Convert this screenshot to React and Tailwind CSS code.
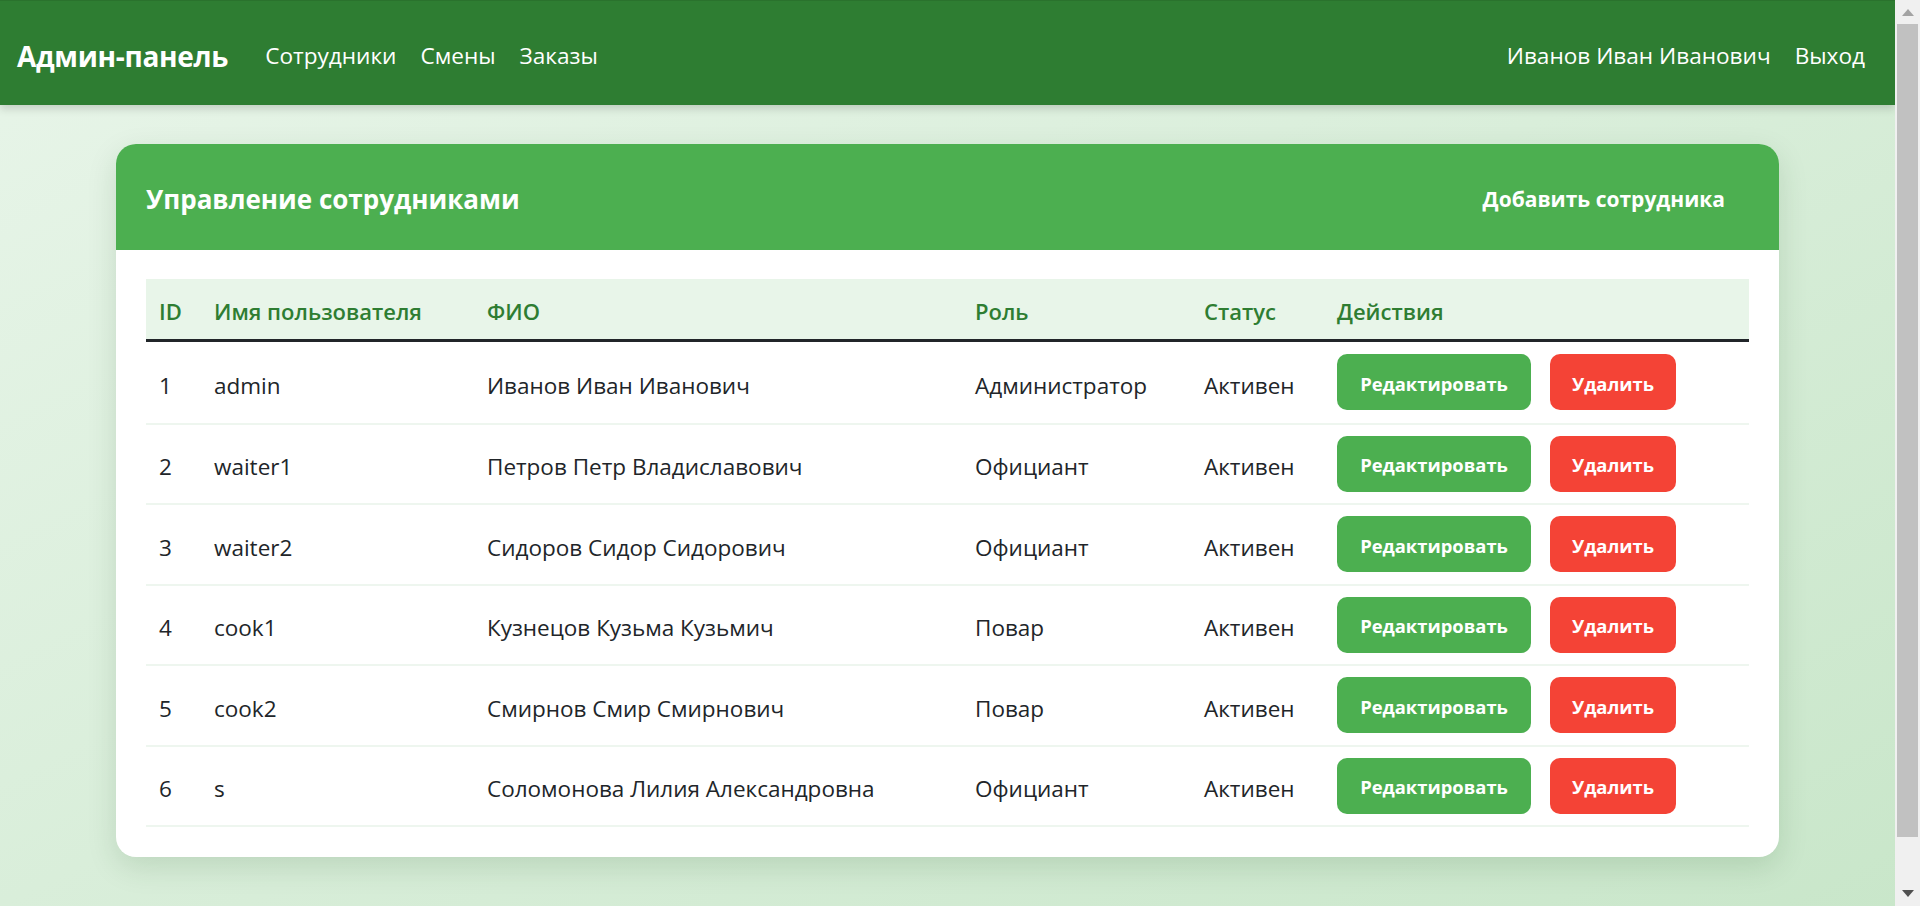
import React from "react";

const rows = [
  ["1", "admin", "Иванов Иван Иванович", "Администратор"],
  ["2", "waiter1", "Петров Петр Владиславович", "Официант"],
  ["3", "waiter2", "Сидоров Сидор Сидорович", "Официант"],
  ["4", "cook1", "Кузнецов Кузьма Кузьмич", "Повар"],
  ["5", "cook2", "Смирнов Смир Смирнович", "Повар"],
  ["6", "s", "Соломонова Лилия Александровна", "Официант"],
];

function Scrollbar() {
  return (
    <div className="w-[25px] h-full bg-[#f0f0f0] flex flex-col items-center shrink-0">
      <div className="h-[24px] w-full flex items-center justify-center">
        <svg width="12" height="7" viewBox="0 0 12 7"><path d="M6 0 L12 7 L0 7 Z" fill="#a3a3a3" /></svg>
      </div>
      <div className="w-[21px] h-[813px] bg-[#c1c1c1]" />
      <div className="flex-1 w-full flex items-end justify-center pb-[9px]">
        <svg width="12" height="7" viewBox="0 0 12 7"><path d="M0 0 L12 0 L6 7 Z" fill="#505050" /></svg>
      </div>
    </div>
  );
}

export default function App() {
  return (
    <div
      className="h-screen flex overflow-hidden"
      style={{ fontFamily: '"Open Sans", "Noto Sans", sans-serif' }}
    >
      <div className="flex-1 overflow-hidden">
        <div className="min-h-[965px] bg-gradient-to-br from-[#e8f5e9] to-[#c8e6c9] pb-[110px]">
          <nav className="h-[105px] bg-[#2e7d32] border-t border-[#2a722d] shadow-[0_4px_8px_rgba(0,0,0,0.15)] flex items-center justify-between pl-[17px] pr-[30px] pt-[5px] text-white relative z-10">
            <div className="flex items-center">
              <span className="text-[28px] font-bold tracking-[-0.3px] mr-[37px]">Админ-панель</span>
              <div className="flex items-center gap-[24px] text-[22.6px]">
                <span>Сотрудники</span>
                <span>Смены</span>
                <span>Заказы</span>
              </div>
            </div>
            <div className="flex items-center gap-[24px] text-[22.6px]">
              <span>Иванов Иван Иванович</span>
              <span>Выход</span>
            </div>
          </nav>

          <div className="mx-auto mt-[39px] w-[1663px] bg-white rounded-[20px] shadow-[0_10px_30px_rgba(0,60,0,0.13)] overflow-hidden">
            <div className="h-[106px] bg-[#4caf50] flex items-center justify-between pl-[30px] pr-[30px] pt-[5px] text-white">
              <h2 className="text-[26px] font-bold">Управление сотрудниками</h2>
              <button className="px-[24px] py-[10px] text-[21px] font-bold">Добавить сотрудника</button>
            </div>
            <div className="p-[30px] pt-[29px]">
              <table className="w-full table-fixed text-[22.5px] text-[#212529] border-collapse">
                <colgroup>
                  <col className="w-[55px]" />
                  <col className="w-[273px]" />
                  <col className="w-[488px]" />
                  <col className="w-[229px]" />
                  <col className="w-[133px]" />
                  <col />
                </colgroup>
                <thead>
                  <tr className="bg-[#e8f5e9] text-[#2e7d32] h-[61px] border-b-[3px] border-[#212529]">
                    <th className="text-left font-semibold px-[13px] pt-[5px] text-[22px]">ID</th>
                    <th className="text-left font-semibold px-[13px] pt-[5px] text-[22px]">Имя пользователя</th>
                    <th className="text-left font-semibold px-[13px] pt-[5px] text-[22px]">ФИО</th>
                    <th className="text-left font-semibold px-[13px] pt-[5px] text-[22px]">Роль</th>
                    <th className="text-left font-semibold px-[13px] pt-[5px] text-[22px]">Статус</th>
                    <th className="text-left font-semibold px-[13px] pt-[5px] text-[22px]">Действия</th>
                  </tr>
                </thead>
                <tbody>
                  {rows.map((r, i) => (
                    <tr
                      key={r[0]}
                      className={(i === 0 ? "h-[83.5px]" : "h-[80.5px]") + " border-b-2 border-[#eef6ef]"}
                    >
                      <td className="px-[13px] pt-[7px]">{r[0]}</td>
                      <td className="px-[13px] pt-[7px]">{r[1]}</td>
                      <td className="px-[13px] pt-[7px]">{r[2]}</td>
                      <td className="px-[13px] pt-[7px]">{r[3]}</td>
                      <td className="px-[13px] pt-[7px]">Активен</td>
                      <td className="px-[13px]">
                        <div className="flex items-center gap-[19px]">
                          <button className="h-[56px] w-[194px] rounded-[10px] bg-[#4caf50] text-white font-bold text-[18.4px] pt-[3px]">
                            Редактировать
                          </button>
                          <button className="h-[56px] w-[126px] rounded-[10px] bg-[#f44336] text-white font-bold text-[18.4px] pt-[3px]">
                            Удалить
                          </button>
                        </div>
                      </td>
                    </tr>
                  ))}
                </tbody>
              </table>
            </div>
          </div>
        </div>
      </div>
      <Scrollbar />
    </div>
  );
}
